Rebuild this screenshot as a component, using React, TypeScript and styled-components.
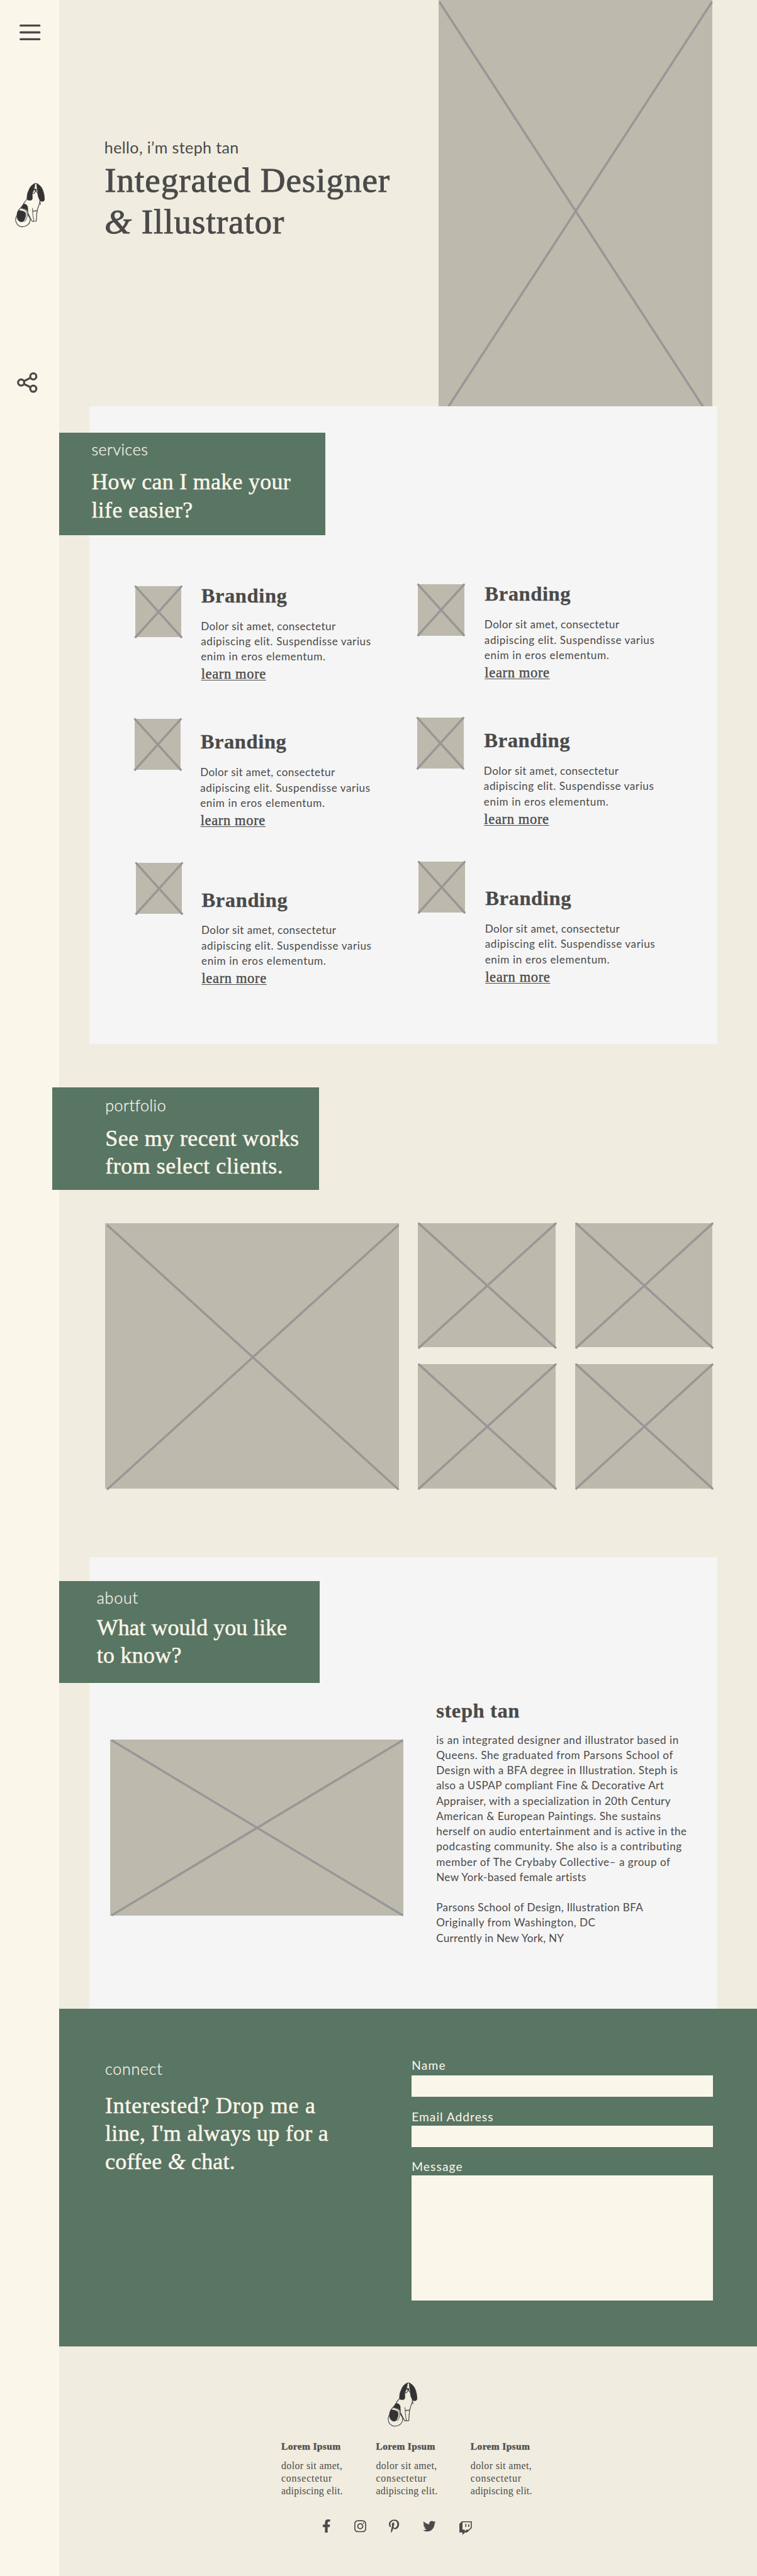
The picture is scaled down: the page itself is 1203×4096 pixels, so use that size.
import React from "react";
import styled, { createGlobalStyle } from "styled-components";
import { FaFacebookF, FaInstagram, FaPinterestP, FaTwitter, FaTwitch } from "react-icons/fa";

/* Design units are those of a 1440px wide artboard. */
const SCALE = 0.8356;
const u = (n: number) => `${(n * SCALE).toFixed(2)}px`;

const color = {
  cream: "#fbf6ea",
  sand: "#f0ecdf",
  panel: "#f5f5f5",
  green: "#597563",
  stone: "#bdb9ac",
  cross: "#979797",
  ink: "#4a4a4a",
  dog: "#333333",
};
const serif = `"Liberation Serif", "Times New Roman", serif`;
const sans = `Lato, "Open Sans", sans-serif`;

const GlobalStyle = createGlobalStyle`
  *, *::before, *::after { box-sizing: border-box; }
  body { margin: 0; background: ${color.sand}; }
  h1, h2, h3, p { margin: 0; font-weight: 400; }
`;

/* ---------- shell ---------- */
const Page = styled.div`
  display: flex;
  width: 1203px;
  height: 4096px;
  overflow: hidden;
  background: ${color.sand};
  color: ${color.ink};
  font-family: ${sans};
`;
const Sidebar = styled.nav`
  flex: 0 0 ${u(112)};
  background: ${color.cream};
  display: flex;
  flex-direction: column;
  align-items: flex-start;
`;
const SideItem = styled.div<{ $top: number; $left: number; $w: number; $h: number }>`
  margin-top: ${(p) => u(p.$top)};
  margin-left: ${(p) => u(p.$left)};
  width: ${(p) => u(p.$w)};
  height: ${(p) => u(p.$h)};
  svg { display: block; width: 100%; height: 100%; overflow: visible; }
`;
const Main = styled.main`
  flex: 1 0 0;
  min-width: 0;
`;

/* ---------- text ---------- */
const Line = styled.span<{ $track?: number }>`
  display: block;
  white-space: nowrap;
  letter-spacing: ${(p) => u(p.$track ?? 0)};
`;
const Ampersand = styled.em`
  font-style: italic;
`;
type TextLine = [string, number];
const Lines = ({ rows, fancy }: { rows: TextLine[]; fancy?: boolean }) => (
  <>
    {rows.map(([text, track]) => {
      const [before, after] = text.split("&");
      return (
        <Line key={text} $track={track}>
          {fancy && after !== undefined ? <>{before}<Ampersand>&amp;</Ampersand>{after}</> : text}
        </Line>
      );
    })}
  </>
);

/* ---------- image placeholder ---------- */
const Frame = styled.div<{ $w: number; $h: number }>`
  flex: none;
  width: ${(p) => u(p.$w)};
  height: ${(p) => u(p.$h)};
  background: ${color.stone};
  svg { display: block; width: 100%; height: 100%; overflow: visible; }
`;
type Box = [number, number, number, number];
const Placeholder = ({ w, h, cross }: { w: number; h: number; cross: Box }) => {
  const [x1, y1, x2, y2] = cross;
  return (
    <Frame $w={w} $h={h}>
      <svg viewBox={`0 0 ${w} ${h}`} preserveAspectRatio="none">
        <path
          d={`M${x1} ${y1}L${x2} ${y2}M${x2} ${y1}L${x1} ${y2}`}
          stroke={color.cross}
          strokeWidth="4.2"
          strokeLinecap="round"
          fill="none"
        />
      </svg>
    </Frame>
  );
};

/* ---------- hero ---------- */
const Hero = styled.header`
  display: flex;
  justify-content: space-between;
  height: ${u(773)};
  padding-left: ${u(87)};
  padding-right: ${u(85)};
  overflow: hidden;
`;
const HeroCopy = styled.div`
  padding-top: ${u(261.7)};
`;
const Hello = styled.p`
  font-size: ${u(30)};
  line-height: ${u(36)};
  margin-left: ${u(-0.5)};
`;
const HeroTitle = styled.h1`
  margin-top: ${u(5.8)};
  font-family: ${serif};
  font-size: ${u(66)};
  line-height: ${u(80)};
  -webkit-text-stroke: 0.9px ${color.ink};
`;

/* ---------- banners ---------- */
const BannerBox = styled.div<{ $w: number; $shift: number; $pad: number; $top: number; $gap: number }>`
  width: ${(p) => u(p.$w)};
  height: ${u(194.8)};
  margin-left: ${(p) => u(p.$shift)};
  padding: ${(p) => u(p.$top)} 0 0 ${(p) => u(p.$pad)};
  background: ${color.green};
  color: ${color.cream};
  h2 { margin-top: ${(p) => u(p.$gap)}; }
`;
const Eyebrow = styled.p`
  font-size: ${u(30)};
  font-weight: 300;
  line-height: ${u(36)};
  -webkit-text-stroke: 0.3px ${color.cream};
`;
const BannerTitle = styled.h2`
  font-family: ${serif};
  font-size: ${u(43)};
  line-height: ${u(53)};
  -webkit-text-stroke: 0.5px ${color.cream};
`;

/* ---------- panels ---------- */
const Panel = styled.section<{ $h: number; $top: number }>`
  width: ${u(1194)};
  height: ${(p) => u(p.$h)};
  margin-left: ${u(58)};
  padding-top: ${(p) => u(p.$top)};
  background: ${color.panel};
`;

/* ---------- services ---------- */
const ServiceColumns = styled.div`
  display: flex;
  padding-left: ${u(87)};
`;
const ServiceColumn = styled.div<{ $top: number }>`
  flex: 0 0 ${u(538)};
  padding-top: ${(p) => u(p.$top)};
`;
const ServiceItem = styled.article<{ $h: number; $shift: number; $gap: number }>`
  display: flex;
  gap: ${(p) => u(p.$gap)};
  height: ${(p) => u(p.$h)};
  margin-left: ${(p) => u(p.$shift)};
`;
const ServiceCopy = styled.div<{ $drop: number }>`
  padding-top: ${(p) => u(p.$drop)};
  margin-top: ${u(-3.7)};
`;
const ItemTitle = styled.h3`
  font-family: ${serif};
  font-weight: 700;
  font-size: ${u(39)};
  line-height: ${u(44)};
  -webkit-text-stroke: 0.3px ${color.ink};
`;
const ItemText = styled.p`
  margin-top: ${u(21.6)};
  font-size: ${u(20.5)};
  line-height: ${u(29.2)};
  margin-left: ${u(-0.6)};
`;
const LearnMore = styled.a`
  display: inline-block;
  margin-top: ${u(3.2)};
  font-family: ${serif};
  font-size: ${u(27)};
  line-height: ${u(30)};
  letter-spacing: ${u(0.75)};
  text-decoration: underline;
  text-decoration-thickness: 1px;
  text-underline-offset: ${u(2)};
  -webkit-text-stroke: 0.4px ${color.ink};
`;

/* ---------- portfolio ---------- */
const Portfolio = styled.section`
  height: ${u(976)};
  padding-top: ${u(82)};
`;
const Gallery = styled.div`
  display: flex;
  gap: ${u(37)};
  margin: ${u(63.4)} 0 0 ${u(88.2)};
`;
const Thumbs = styled.div`
  display: grid;
  grid-template-columns: ${u(262)} ${u(261)};
  column-gap: ${u(37)};
  row-gap: ${u(32.2)};
  align-content: start;
`;

/* ---------- about ---------- */
const AboutRow = styled.div`
  display: flex;
  padding-left: ${u(39)};
`;
const AboutPicture = styled.div`
  padding-top: ${u(107.4)};
`;
const Bio = styled.div`
  padding: ${u(29.6)} 0 0 ${u(62.6)};
`;
const BioName = styled.h3`
  font-family: ${serif};
  font-weight: 700;
  font-size: ${u(39)};
  line-height: ${u(46)};
  -webkit-text-stroke: 0.3px ${color.ink};
`;
const BioText = styled.p<{ $gap: number }>`
  margin-top: ${(p) => u(p.$gap)};
  font-size: ${u(20.5)};
  line-height: ${u(28.98)};
`;

/* ---------- connect ---------- */
const Connect = styled.section`
  display: flex;
  height: ${u(642.8)};
  padding-left: ${u(88)};
  background: ${color.green};
  color: ${color.cream};
`;
const ConnectCopy = styled.div`
  flex: 0 0 ${u(583)};
  padding-top: ${u(96)};
  h2 { margin-top: ${u(26.4)}; }
`;
const Form = styled.form`
  width: ${u(573.4)};
  padding-top: ${u(94.2)};
  display: flex;
  flex-direction: column;
`;
const Label = styled.label<{ $above: number; $below: number; $track: number }>`
  margin: ${(p) => u(p.$above)} 0 ${(p) => u(p.$below)};
  font-size: ${u(23)};
  line-height: ${u(28)};
  letter-spacing: ${(p) => u(p.$track)};
`;
const Field = styled.input`
  height: ${u(40.8)};
  padding: 0 ${u(10)};
  border: 0;
  border-radius: 0;
  background: ${color.cream};
`;
const MessageField = styled.textarea`
  display: block;
  height: ${u(238)};
  padding: ${u(10)};
  border: 0;
  border-radius: 0;
  resize: none;
  background: ${color.cream};
`;

/* ---------- footer ---------- */
const Footer = styled.footer`
  padding-left: ${u(423)};
`;
const FooterLogo = styled.div`
  width: ${u(57)};
  height: ${u(85)};
  margin: ${u(68.2)} 0 0 ${u(202)};
  svg { display: block; width: 100%; height: 100%; overflow: visible; }
`;
const FooterColumns = styled.div`
  display: flex;
  margin-top: ${u(26.4)};
`;
const FooterColumn = styled.div`
  flex: 0 0 ${u(180)};
  font-family: ${serif};
`;
const FooterHeading = styled.h3`
  font-weight: 700;
  font-size: ${u(18.6)};
  line-height: ${u(22)};
  letter-spacing: ${u(0.4)};
  -webkit-text-stroke: 0.3px ${color.ink};
`;
const FooterText = styled.p`
  margin-top: ${u(14.2)};
  font-size: ${u(19)};
  line-height: ${u(24)};
`;
const Social = styled.div`
  display: flex;
  gap: ${u(44.2)};
  margin: ${u(41.4)} 0 0 ${u(77.8)};
`;
const SocialIcon = styled.a<{ $w: number; $drop?: number }>`
  width: ${(p) => u(p.$w)};
  height: ${u(26)};
  margin-top: ${(p) => u(p.$drop ?? 0)};
  svg { display: block; width: 100%; height: 100%; }
`;

/* ---------- drawings ---------- */
const Dog = () => (
  <svg viewBox="85 83 171 254" fill="none" stroke={color.dog} strokeWidth="3.8" strokeLinecap="round" strokeLinejoin="round">
    {/* ears */}
    <path fill={color.dog} strokeWidth="2" d="M198 87C183 90 171 104 164 122C159 134 155 140 154 152L152 173C153 180 163 183 173 182C180 181 184 176 184 169L183 148C185 141 186 135 190 127C195 116 198 102 198 87Z" />
    <path fill={color.dog} strokeWidth="2" d="M208 87C225 92 238 108 244 126C250 142 253 160 253 176C253 184 247 188 239 188C230 189 226 184 222 174C216 162 214 150 215 140C213 124 208 108 208 87Z" />
    <path d="M192 90C199 85 208 85 215 90" />
    {/* muzzle */}
    <path fill={color.dog} strokeWidth="2" d="M195 119C198 117 204 117 207 119C207 123 205 126 202 129C199 127 196 124 195 119Z" />
    <path d="M202 128L195 140C193 144 188 145 186 143M203 128L212 138L215 144" />
    <path strokeWidth="2.6" d="M190 124L194 121M208 121L212 126" />
    {/* back, chest and front legs */}
    <path d="M153 176C144 186 136 194 132 205C124 216 114 228 104 240C98 247 97 256 96 264" />
    <path d="M225 184C228 190 226 196 224 200C221 210 216 222 212 236L208 262L206 301L183 302C176 292 168 276 159 256" />
    <path d="M227 190L231 205M224 201L231 203" strokeWidth="3" />
    <path d="M184 227L186 262L192 301M187 245L197 241L203 244L211 240M187 242L195 246M200 240L206 242" strokeWidth="3" />
    {/* saddle patch */}
    <path fill={color.dog} strokeWidth="2" d="M133 203C146 202 156 210 157 222C158 232 157 240 159 250C152 240 145 229 119 226C123 219 129 212 133 203Z" />
    {/* haunch */}
    <path fill={color.dog} strokeWidth="2" d="M106 240C122 240 138 245 144 253C148 262 145 278 139 292C136 302 129 305 122 305C108 305 97 293 95 275C96 260 99 248 106 240Z" />
    <path d="M120 228C140 232 152 244 154 259C155 276 150 294 139 303" strokeWidth="3" />
    <path d="M157 248C157 262 160 272 165 278" strokeWidth="3" />
    {/* tail */}
    <path d="M96 268C86 280 85 300 94 315C103 328 116 334 129 333C150 332 168 318 171 298C172 288 168 276 161 266" />
  </svg>
);
const Burger = () => (
  <svg viewBox="0 0 40 30" stroke={color.ink} strokeWidth="4" strokeLinecap="round">
    <path d="M2 2H38M2 15H38M2 28H38" />
  </svg>
);
const Share = () => (
  <svg viewBox="0 0 39 39" fill="none" stroke={color.ink} strokeWidth="3.9">
    <circle cx="7.9" cy="19.5" r="5.8" />
    <circle cx="31" cy="7.8" r="5.8" />
    <circle cx="31" cy="31.2" r="5.8" />
    <path d="M13 16.9L25.8 10.5M13 22.1L25.8 28.5" />
  </svg>
);

/* ---------- content ---------- */
const serviceText: TextLine[] = [
  ["Dolor sit amet, consectetur", 0.49],
  ["adipiscing elit. Suspendisse varius", 0.69],
  ["enim in eros elementum.", 0.75],
];
const serviceColumns = [
  { top: 97.3, gap: 37.6 },
  { top: 94.5, gap: 39 },
];
const serviceRows = [
  { h: 253.2, drop: 0, shift: 0 },
  { h: 273.6, drop: 25.3, shift: -1.2 },
  { h: 120, drop: 52.3, shift: 1 },
];
const bio: TextLine[] = [
  ["is an integrated designer and illustrator based in", 0.68],
  ["Queens. She graduated from Parsons School of", 0.67],
  ["Design with a BFA degree in Illustration. Steph is", 0.51],
  ["also a USPAP compliant Fine & Decorative Art", 0.47],
  ["Appraiser, with a specialization in 20th Century", 0.49],
  ["American & European Paintings. She sustains", 0.59],
  ["herself on audio entertainment and is active in the", 0.54],
  ["podcasting community. She also is a contributing", 0.66],
  ["member of The Crybaby Collective– a group of", 0.62],
  ["New York-based female artists", 0.48],
];
const facts: TextLine[] = [
  ["Parsons School of Design, Illustration BFA", 0.46],
  ["Originally from Washington, DC", 0.6],
  ["Currently in New York, NY", 0.32],
];
const thumbCross = (w: number): Box => [2.2, 0.8, w, 236.8];

export default function App() {
  return (
    <>
      <GlobalStyle />
      <Page>
        <Sidebar>
          <SideItem $top={46.5} $left={36.6} $w={40} $h={30}><Burger /></SideItem>
          <SideItem $top={271.2} $left={28.5} $w={57} $h={84.6}><Dog /></SideItem>
          <SideItem $top={276.2} $left={32.5} $w={39} $h={39}><Share /></SideItem>
        </Sidebar>
        <Main>
          <Hero>
            <HeroCopy>
              <Hello><Line $track={0.43}>hello, i’m steph tan</Line></Hello>
              <HeroTitle>
                <Lines fancy rows={[["Integrated Designer", 1.1], ["& Illustrator", 1.1]]} />
              </HeroTitle>
            </HeroCopy>
            <Placeholder w={521} h={773} cross={[2.5, 5, 519, 798.6]} />
          </Hero>

          <Panel $h={1214} $top={50.1}>
            <BannerBox $w={507.2} $shift={-58} $pad={62} $top={13.3} $gap={18.4}>
              <Eyebrow><Line $track={0.6}>services</Line></Eyebrow>
              <BannerTitle>
                <Lines rows={[["How can I make your", 0.35], ["life easier?", 0.45]]} />
              </BannerTitle>
            </BannerBox>
            <ServiceColumns>
              {serviceColumns.map((column) => (
                <ServiceColumn key={column.top} $top={column.top}>
                  {serviceRows.map((row) => (
                    <ServiceItem key={row.h} $h={row.h} $shift={row.shift} $gap={column.gap}>
                      <Placeholder w={88} h={97} cross={[0.7, 0.8, 87.6, 97]} />
                      <ServiceCopy $drop={row.drop}>
                        <ItemTitle><Line $track={0.7}>Branding</Line></ItemTitle>
                        <ItemText><Lines rows={serviceText} /></ItemText>
                        <LearnMore>learn more</LearnMore>
                      </ServiceCopy>
                    </ServiceItem>
                  ))}
                </ServiceColumn>
              ))}
            </ServiceColumns>
          </Panel>

          <Portfolio>
            <BannerBox $w={507.8} $shift={-12.8} $pad={101} $top={15.9} $gap={18.5}>
              <Eyebrow><Line $track={0.6}>portfolio</Line></Eyebrow>
              <BannerTitle>
                <Lines rows={[["See my recent works", 0.5], ["from select clients.", 0.63]]} />
              </BannerTitle>
            </BannerBox>
            <Gallery>
              <Placeholder w={558} h={506} cross={[5, 4.4, 557, 505.6]} />
              <Thumbs>
                {[262, 261, 262, 261].map((w, i) => (
                  <Placeholder key={i} w={w} h={236.8} cross={thumbCross(w)} />
                ))}
              </Thumbs>
            </Gallery>
          </Portfolio>

          <Panel $h={859} $top={45.2}>
            <BannerBox $w={496} $shift={-58} $pad={72} $top={14} $gap={12.8}>
              <Eyebrow><Line $track={0.9}>about</Line></Eyebrow>
              <BannerTitle>
                <Lines rows={[["What would you like", 0], ["to know?", 0.35]]} />
              </BannerTitle>
            </BannerBox>
            <AboutRow>
              <AboutPicture>
                <Placeholder w={558} h={334.8} cross={[4, 2, 555.5, 333.8]} />
              </AboutPicture>
              <Bio>
                <BioName><Line $track={0.7}>steph tan</Line></BioName>
                <BioText $gap={18.2}><Lines rows={bio} /></BioText>
                <BioText $gap={28.98}><Lines rows={facts} /></BioText>
              </Bio>
            </AboutRow>
          </Panel>

          <Connect>
            <ConnectCopy>
              <Eyebrow><Line $track={0.8}>connect</Line></Eyebrow>
              <BannerTitle>
                <Lines
                  fancy
                  rows={[
                    ["Interested? Drop me a", 0.95],
                    ["line, I'm always up for a", 0.35],
                    ["coffee & chat.", 0.25],
                  ]}
                />
              </BannerTitle>
            </ConnectCopy>
            <Form>
              <Label htmlFor="name" $above={0} $below={5} $track={1.4}>Name</Label>
              <Field id="name" />
              <Label htmlFor="email" $above={24.4} $below={2.6} $track={1.2}>Email Address</Label>
              <Field id="email" />
              <Label htmlFor="message" $above={22.7} $below={3.5} $track={1.3}>Message</Label>
              <MessageField id="message" />
            </Form>
          </Connect>

          <Footer>
            <FooterLogo><Dog /></FooterLogo>
            <FooterColumns>
              {[0, 1, 2].map((i) => (
                <FooterColumn key={i}>
                  <FooterHeading>Lorem Ipsum</FooterHeading>
                  <FooterText>
                    <Lines rows={[["dolor sit amet,", 0.48], ["consectetur", 0.95], ["adipiscing elit.", 0.34]]} />
                  </FooterText>
                </FooterColumn>
              ))}
            </FooterColumns>
            <Social>
              <SocialIcon $w={16.25}><FaFacebookF /></SocialIcon>
              <SocialIcon $w={22.75}><FaInstagram /></SocialIcon>
              <SocialIcon $w={19.5}><FaPinterestP /></SocialIcon>
              <SocialIcon $w={24.7}><FaTwitter /></SocialIcon>
              <SocialIcon $w={26} $drop={4}><FaTwitch /></SocialIcon>
            </Social>
          </Footer>
        </Main>
      </Page>
    </>
  );
}
